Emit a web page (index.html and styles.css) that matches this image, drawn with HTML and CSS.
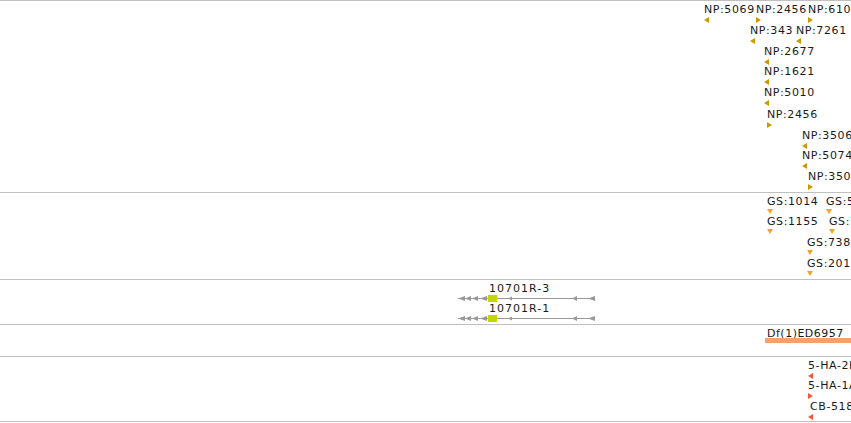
FILE: index.html
```html
<!DOCTYPE html>
<html lang="en">
<head>
  <meta charset="UTF-8" />
  <title>Track view</title>
  <link rel="stylesheet" href="styles.css">
</head>
<body>
  <div class="tracks">
    <!-- protein matches -->
    <div class="track t-np">
      <div class="feat" style="left:704px;top:3px"><span class="lbl">NP:5069</span><svg class="arw np" width="5" height="6"><polygon points="0,3 5,0 5,6"/></svg></div>
      <div class="feat" style="left:756px;top:3px"><span class="lbl">NP:2456</span><svg class="arw np" width="5" height="6"><polygon points="5,3 0,0 0,6"/></svg></div>
      <div class="feat" style="left:808px;top:3px"><span class="lbl">NP:6102</span><svg class="arw np" width="5" height="6"><polygon points="5,3 0,0 0,6"/></svg></div>
      <div class="feat" style="left:750px;top:24px"><span class="lbl">NP:343</span><svg class="arw np" width="5" height="6"><polygon points="0,3 5,0 5,6"/></svg></div>
      <div class="feat" style="left:796px;top:24px"><span class="lbl">NP:7261</span><svg class="arw np" width="5" height="6"><polygon points="0,3 5,0 5,6"/></svg></div>
      <div class="feat" style="left:764px;top:45px"><span class="lbl">NP:2677</span><svg class="arw np" width="5" height="6"><polygon points="0,3 5,0 5,6"/></svg></div>
      <div class="feat" style="left:764px;top:65px"><span class="lbl">NP:1621</span><svg class="arw np" width="5" height="6"><polygon points="0,3 5,0 5,6"/></svg></div>
      <div class="feat" style="left:764px;top:86px"><span class="lbl">NP:5010</span><svg class="arw np" width="5" height="6"><polygon points="0,3 5,0 5,6"/></svg></div>
      <div class="feat" style="left:767px;top:108px"><span class="lbl">NP:2456</span><svg class="arw np" width="5" height="6"><polygon points="5,3 0,0 0,6"/></svg></div>
      <div class="feat" style="left:802px;top:129px"><span class="lbl">NP:35061</span><svg class="arw np" width="5" height="6"><polygon points="0,3 5,0 5,6"/></svg></div>
      <div class="feat" style="left:802px;top:149px"><span class="lbl">NP:50742</span><svg class="arw np" width="5" height="6"><polygon points="0,3 5,0 5,6"/></svg></div>
      <div class="feat" style="left:808px;top:170px"><span class="lbl">NP:3507</span><svg class="arw np" width="5" height="6"><polygon points="5,3 0,0 0,6"/></svg></div>
    </div>

    <!-- gene sets -->
    <div class="track t-gs">
      <div class="feat" style="left:767px;top:3px"><span class="lbl">GS:1014</span><svg class="arw gs" width="6" height="5"><polygon points="0,0 6,0 3,5"/></svg></div>
      <div class="feat" style="left:826px;top:3px"><span class="lbl">GS:5530</span><svg class="arw gs" width="6" height="5"><polygon points="0,0 6,0 3,5"/></svg></div>
      <div class="feat" style="left:767px;top:23px"><span class="lbl">GS:1155</span><svg class="arw gs" width="6" height="5"><polygon points="0,0 6,0 3,5"/></svg></div>
      <div class="feat" style="left:829px;top:23px"><span class="lbl">GS:7742</span><svg class="arw gs" width="6" height="5"><polygon points="0,0 6,0 3,5"/></svg></div>
      <div class="feat" style="left:807px;top:44px"><span class="lbl">GS:7381</span><svg class="arw gs" width="6" height="5"><polygon points="0,0 6,0 3,5"/></svg></div>
      <div class="feat" style="left:807px;top:65px"><span class="lbl">GS:2013</span><svg class="arw gs" width="6" height="5"><polygon points="0,0 6,0 3,5"/></svg></div>
    </div>

    <!-- transcripts -->
    <div class="track t-tx">
      <div class="feat tx" style="left:456px;top:3px">
        <span class="lbl">10701R-3</span>
        <svg class="model" width="142" height="9">
          <line x1="2" y1="4.5" x2="139" y2="4.5"/>
          <polygon points="2,4.5 9,2 9,7"/>
          <polygon points="9,4.5 15,2 15,7"/>
          <polygon points="16,4.5 22,2 22,7"/>
          <polygon points="24,4.5 31,2 31,7"/>
          <rect class="cds" x="32" y="1" width="9" height="7"/>
          <polygon points="52,4.5 56,2.5 56,6.5"/>
          <polygon points="116,4.5 121,2 121,7"/>
          <polygon points="132,4.5 139,2 139,7"/>
        </svg>
      </div>
      <div class="feat tx" style="left:456px;top:23px">
        <span class="lbl">10701R-1</span>
        <svg class="model" width="142" height="9">
          <line x1="2" y1="4.5" x2="139" y2="4.5"/>
          <polygon points="2,4.5 9,2 9,7"/>
          <polygon points="9,4.5 15,2 15,7"/>
          <polygon points="16,4.5 22,2 22,7"/>
          <polygon points="24,4.5 31,2 31,7"/>
          <rect class="cds" x="32" y="1" width="9" height="7"/>
          <polygon points="52,4.5 56,2.5 56,6.5"/>
          <polygon points="116,4.5 121,2 121,7"/>
          <polygon points="132,4.5 139,2 139,7"/>
        </svg>
      </div>
    </div>

    <!-- deficiencies -->
    <div class="track t-df">
      <div class="feat df" style="left:765px;top:3px"><span class="lbl">Df(1)ED6957</span><div class="bar"></div></div>
    </div>

    <!-- RNAi / misc -->
    <div class="track t-ha">
      <div class="feat" style="left:808px;top:3px"><span class="lbl">5-HA-2B</span><svg class="arw ha" width="5" height="6"><polygon points="0,3 5,0 5,6"/></svg></div>
      <div class="feat" style="left:808px;top:23px"><span class="lbl">5-HA-1A</span><svg class="arw ha" width="5" height="6"><polygon points="5,3 0,0 0,6"/></svg></div>
      <div class="feat" style="left:808px;top:44px"><span class="lbl cb">CB-5180</span><svg class="arw ha" width="5" height="6"><polygon points="0,3 5,0 5,6"/></svg></div>
    </div>
  </div>
</body>
</html>
```

FILE: styles.css
```css
html, body {
  margin: 0;
  padding: 0;
  background: #fff;
  overflow: hidden;
  font-family: "DejaVu Sans", sans-serif;
}
.tracks {
  width: 851px;
  display: flex;
  flex-direction: column;
  border-bottom: 1px solid #c0c0c0;
}
.track {
  position: relative;
  overflow: hidden;
  border-top: 1px solid #c0c0c0;
}
.t-np { height: 191px; }
.t-gs { height: 86px; }
.t-tx { height: 44px; }
.t-df { height: 31px; }
.t-ha { height: 64px; }

.feat {
  position: absolute;
  display: flex;
  flex-direction: column;
  align-items: flex-start;
  white-space: nowrap;
}
.lbl {
  display: block;
  font-size: 11px;
  line-height: 11px;
  letter-spacing: 0.6px;
  color: #1a1a1a;
}
.lbl.cb { padding-left: 2px; }
.arw {
  display: block;
  margin-top: 2px;
}
.np { fill: #cc9900; }
.gs { fill: #f5a320; }
.ha { fill: #f05a3c; }

.tx .lbl {
  padding-left: 33px;
  letter-spacing: 1px;
}
.model {
  display: block;
}
.model line { stroke: #999; stroke-width: 1; }
.model polygon { fill: #999; }
.model .cds { fill: #c4d600; }

.df .bar {
  margin-top: -1px;
  width: 100px;
  height: 5px;
  background: #f4a070;
}
.df .lbl {
  padding-left: 2px;
  letter-spacing: 0.5px;
}
```
